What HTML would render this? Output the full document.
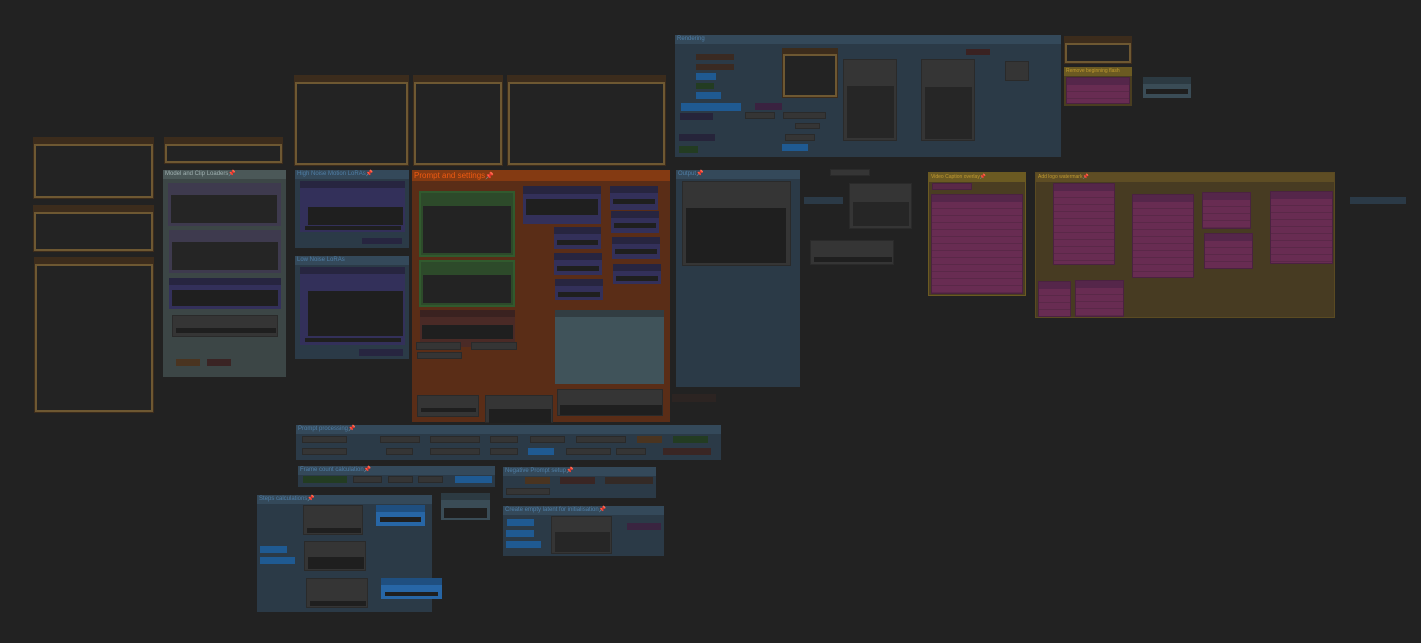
<!DOCTYPE html>
<html><head><meta charset="utf-8"><style>
body{margin:0;width:1421px;height:643px;background:#222222;overflow:hidden;font-family:"Liberation Sans",sans-serif;position:relative}
div{position:absolute;box-sizing:border-box}
.note{background:#3c2c1c}
.note i{position:absolute;left:1px;right:1px;top:7px;bottom:1px;border:2px solid #6e5832;background:#232323}
.bl{background:#2b3a47}.bl .t{background:#34495a;color:#4f7ea6}
.t{position:absolute;left:0;top:0;right:0;height:9px;padding-left:2px;font-size:6px;line-height:9px;white-space:nowrap}
.n{background:#353535;border:1px solid #2a2a2a}
.h{background:#2c2c2c}
.w{background:#1f1f1f}
.p{background:linear-gradient(#55264a 0 7px,transparent 7px),repeating-linear-gradient(#682c52 0 6px,#5a2848 6px 7px);border:1px solid #4a2240}
.pu{background:#33305a}
.ph{background:#272540}
.bb{background:#1f5a92}
</style></head><body>

<div class="note" style="left:33px;top:137px;width:121px;height:62px"><i></i></div>
<div class="note" style="left:33px;top:205px;width:121px;height:47px"><i></i></div>
<div class="note" style="left:34px;top:257px;width:120px;height:156px"><i></i></div>
<div class="note" style="left:164px;top:137px;width:119px;height:27px"><i></i></div>
<div class="note" style="left:294px;top:75px;width:115px;height:91px"><i></i></div>
<div class="note" style="left:413px;top:75px;width:90px;height:91px"><i></i></div>
<div class="note" style="left:507px;top:75px;width:159px;height:91px"><i></i></div>
<div class="note" style="left:1064px;top:36px;width:68px;height:28px"><i></i></div>

<div style="left:163px;top:170px;width:123px;height:207px;background:#3c4646">
<div class="t" style="background:#4b5858;color:#9fb0b0">Model and Clip Loaders<span style="color:#e0306a">📌</span></div>
<div style="left:5px;top:13px;width:113px;height:43px;background:#3e3a4e"><div class="w" style="left:3px;top:12px;width:106px;height:28px;background:#252525"></div></div>
<div style="left:6px;top:60px;width:112px;height:43px;background:#3e3a4e"><div class="w" style="left:3px;top:12px;width:106px;height:28px;background:#252525"></div></div>
<div class="pu" style="left:6px;top:108px;width:112px;height:31px"><div class="ph" style="left:0;top:0;right:0;height:7px"></div><div class="w" style="left:3px;top:12px;width:106px;height:16px"></div></div>
<div class="n" style="left:9px;top:145px;width:106px;height:22px"><div class="w" style="left:3px;top:12px;width:100px;height:5px"></div></div>
<div style="left:13px;top:189px;width:24px;height:7px;background:#4a3420"></div>
<div style="left:44px;top:189px;width:24px;height:7px;background:#3a2424"></div>
</div>

<div class="bl" style="left:295px;top:170px;width:114px;height:78px">
<div class="t">High Noise Motion LoRAs<span style="color:#e0306a">📌</span></div>
<div class="pu" style="left:5px;top:11px;width:105px;height:51px"><div class="ph" style="left:0;top:0;right:0;height:7px"></div><div class="w" style="left:8px;top:26px;width:95px;height:18px"></div><div class="w" style="left:5px;top:45px;width:96px;height:4px"></div></div>
<div class="ph" style="left:67px;top:68px;width:40px;height:6px"></div>
</div>

<div class="bl" style="left:295px;top:256px;width:114px;height:103px">
<div class="t">Low Noise LoRAs</div>
<div class="pu" style="left:5px;top:11px;width:105px;height:78px"><div class="ph" style="left:0;top:0;right:0;height:7px"></div><div class="w" style="left:8px;top:24px;width:95px;height:45px"></div><div class="w" style="left:5px;top:71px;width:96px;height:4px"></div></div>
<div class="ph" style="left:64px;top:93px;width:44px;height:7px"></div>
</div>

<div style="left:412px;top:170px;width:258px;height:252px;background:#5a2d17">
<div class="t" style="background:#843a12;color:#ee5a12;font-size:8px;height:11px;line-height:11px">Prompt and settings<span style="color:#e0306a;font-size:7px">📌</span></div>
<div style="left:7px;top:21px;width:96px;height:66px;background:#2d4a2a;border:2px solid #315a2e"><div class="w" style="left:2px;top:13px;width:88px;height:47px;background:#232323"></div></div>
<div style="left:7px;top:90px;width:96px;height:47px;background:#2d4a2a;border:2px solid #315a2e"><div class="w" style="left:2px;top:13px;width:88px;height:28px;background:#232323"></div></div>
<div style="left:8px;top:140px;width:95px;height:37px;background:#4a2a26"><div class="h" style="left:0;top:0;right:0;height:7px;background:#3a2220"></div><div class="w" style="left:2px;top:15px;width:91px;height:14px"></div></div>
<div class="n" style="left:4px;top:172px;width:45px;height:8px"></div>
<div class="n" style="left:59px;top:172px;width:46px;height:8px"></div>
<div class="n" style="left:5px;top:182px;width:45px;height:7px"></div>
<div class="pu" style="left:111px;top:16px;width:78px;height:38px"><div class="ph" style="left:0;top:0;right:0;height:8px"></div><div class="w" style="left:3px;top:13px;width:72px;height:16px"></div></div>
<div class="pu" style="left:198px;top:16px;width:48px;height:24px"><div class="ph" style="left:0;top:0;right:0;height:7px"></div><div class="w" style="left:3px;top:13px;width:42px;height:5px"></div></div>
<div class="pu" style="left:199px;top:41px;width:48px;height:22px"><div class="ph" style="left:0;top:0;right:0;height:7px"></div><div class="w" style="left:3px;top:12px;width:42px;height:5px"></div></div>
<div class="pu" style="left:200px;top:67px;width:48px;height:22px"><div class="ph" style="left:0;top:0;right:0;height:7px"></div><div class="w" style="left:3px;top:12px;width:42px;height:5px"></div></div>
<div class="pu" style="left:201px;top:94px;width:48px;height:20px"><div class="ph" style="left:0;top:0;right:0;height:7px"></div><div class="w" style="left:3px;top:12px;width:42px;height:5px"></div></div>
<div class="pu" style="left:142px;top:57px;width:47px;height:22px"><div class="ph" style="left:0;top:0;right:0;height:7px"></div><div class="w" style="left:3px;top:13px;width:41px;height:5px"></div></div>
<div class="pu" style="left:142px;top:83px;width:48px;height:22px"><div class="ph" style="left:0;top:0;right:0;height:7px"></div><div class="w" style="left:3px;top:13px;width:42px;height:5px"></div></div>
<div class="pu" style="left:143px;top:109px;width:48px;height:21px"><div class="ph" style="left:0;top:0;right:0;height:7px"></div><div class="w" style="left:3px;top:13px;width:42px;height:5px"></div></div>
<div style="left:143px;top:140px;width:109px;height:74px;background:#40535a"><div class="h" style="left:0;top:0;right:0;height:7px;background:#323d42"></div></div>
<div class="n" style="left:145px;top:219px;width:106px;height:27px"><div class="w" style="left:2px;top:15px;width:102px;height:10px"></div></div>
<div class="n" style="left:5px;top:225px;width:62px;height:22px"><div class="w" style="left:3px;top:12px;width:55px;height:4px"></div></div>
<div class="n" style="left:73px;top:225px;width:68px;height:28px"><div class="w" style="left:3px;top:13px;width:62px;height:14px"></div></div>
</div>

<div class="bl" style="left:676px;top:170px;width:124px;height:217px">
<div class="t">Output<span style="color:#e0306a">📌</span></div>
<div class="n" style="left:6px;top:11px;width:109px;height:85px"><div class="w" style="left:3px;top:26px;width:100px;height:55px"></div></div>
</div>

<div class="bl" style="left:675px;top:35px;width:386px;height:122px">
<div class="t">Rendering</div>
<div style="left:21px;top:19px;width:38px;height:6px;background:#3a2a22"></div>
<div style="left:21px;top:29px;width:38px;height:6px;background:#3a2a22"></div>
<div class="bb" style="left:21px;top:38px;width:20px;height:7px"></div>
<div style="left:21px;top:48px;width:18px;height:6px;background:#233c22"></div>
<div class="bb" style="left:21px;top:57px;width:25px;height:7px"></div>
<div class="bb" style="left:6px;top:68px;width:60px;height:8px"></div>
<div style="left:5px;top:78px;width:33px;height:7px;background:#26243a"></div>
<div style="left:4px;top:99px;width:36px;height:7px;background:#26243a"></div>
<div style="left:4px;top:111px;width:19px;height:7px;background:#233c22"></div>
<div style="left:80px;top:68px;width:27px;height:7px;background:#3a2240"></div>
<div class="n" style="left:70px;top:77px;width:30px;height:7px"></div>
<div class="n" style="left:108px;top:77px;width:43px;height:7px"></div>
<div class="n" style="left:120px;top:88px;width:25px;height:6px"></div>
<div class="n" style="left:110px;top:99px;width:30px;height:7px"></div>
<div class="bb" style="left:107px;top:109px;width:26px;height:7px"></div>
<div style="left:107px;top:13px;width:56px;height:50px;background:#3c2c1c"><div style="left:1px;top:6px;right:1px;bottom:1px;border:2px solid #6e5832;background:#232323"></div></div>
<div class="n" style="left:168px;top:24px;width:54px;height:82px"><div class="w" style="left:3px;top:26px;width:47px;height:52px;background:#262626"></div></div>
<div class="n" style="left:246px;top:24px;width:54px;height:82px"><div class="w" style="left:3px;top:27px;width:47px;height:52px;background:#262626"></div></div>
<div style="left:291px;top:14px;width:24px;height:6px;background:#3a2222"></div>
<div class="n" style="left:330px;top:26px;width:24px;height:20px"></div>
</div>

<div style="left:1064px;top:67px;width:68px;height:39px;background:#4a3e20">
<div class="t" style="background:#6b5a22;color:#c09a30;font-size:5px">Remove beginning flash</div>
<div class="p" style="left:2px;top:10px;width:64px;height:27px"></div>
</div>
<div style="left:1143px;top:77px;width:48px;height:21px;background:#3a4c56"><div class="h" style="left:0;top:0;right:0;height:7px;background:#2c3a42"></div><div class="w" style="left:3px;top:12px;width:42px;height:5px"></div></div>

<div class="n" style="left:830px;top:169px;width:40px;height:7px"></div>
<div style="left:804px;top:197px;width:39px;height:7px;background:#2b3a47"></div>
<div class="n" style="left:849px;top:183px;width:63px;height:46px"><div class="w" style="left:3px;top:18px;width:56px;height:24px;background:#262626"></div></div>
<div class="n" style="left:810px;top:240px;width:84px;height:25px"><div class="w" style="left:3px;top:16px;width:78px;height:5px"></div></div>

<div style="left:928px;top:172px;width:98px;height:124px;background:#4a3d22;border:1px solid #6b5a22">
<div class="t" style="background:#6b5a22;color:#c09a30;font-size:5px">Video Caption overlay<span style="color:#e0306a">📌</span></div>
<div class="p" style="left:3px;top:10px;width:40px;height:7px;background:#5a2848"></div>
<div class="p" style="left:2px;top:21px;width:92px;height:100px"></div>
</div>

<div style="left:1035px;top:172px;width:300px;height:146px;background:#473b22;border:1px solid #5a4a22">
<div class="t" style="background:#5e4d24;color:#c09a30;font-size:5px">Add logo watermark<span style="color:#e0306a">📌</span></div>
<div class="p" style="left:17px;top:10px;width:62px;height:82px"></div>
<div class="p" style="left:96px;top:21px;width:62px;height:84px"></div>
<div class="p" style="left:166px;top:19px;width:49px;height:37px"></div>
<div class="p" style="left:168px;top:60px;width:49px;height:36px"></div>
<div class="p" style="left:234px;top:18px;width:63px;height:73px"></div>
<div class="p" style="left:2px;top:108px;width:33px;height:36px"></div>
<div class="p" style="left:39px;top:107px;width:49px;height:37px"></div>
</div>
<div style="left:1350px;top:197px;width:56px;height:7px;background:#2b3a47"></div>
<div style="left:672px;top:394px;width:44px;height:8px;background:#2c2422"></div>

<div class="bl" style="left:296px;top:425px;width:425px;height:35px">
<div class="t">Prompt processing<span style="color:#e0306a">📌</span></div>
<div class="n" style="left:6px;top:11px;width:45px;height:7px"></div><div class="n" style="left:6px;top:23px;width:45px;height:7px"></div>
<div class="n" style="left:84px;top:11px;width:40px;height:7px"></div><div class="n" style="left:134px;top:11px;width:50px;height:7px"></div>
<div class="n" style="left:194px;top:11px;width:28px;height:7px"></div><div class="n" style="left:234px;top:11px;width:35px;height:7px"></div>
<div class="n" style="left:280px;top:11px;width:50px;height:7px"></div>
<div style="left:341px;top:11px;width:25px;height:7px;background:#4a3420"></div>
<div style="left:377px;top:11px;width:35px;height:7px;background:#233c22"></div>
<div class="n" style="left:90px;top:23px;width:27px;height:7px"></div><div class="n" style="left:134px;top:23px;width:50px;height:7px"></div>
<div class="n" style="left:194px;top:23px;width:28px;height:7px"></div>
<div class="bb" style="left:232px;top:23px;width:26px;height:7px"></div>
<div class="n" style="left:270px;top:23px;width:45px;height:7px"></div><div class="n" style="left:320px;top:23px;width:30px;height:7px"></div>
<div style="left:367px;top:23px;width:48px;height:7px;background:#3a2624"></div>
</div>

<div class="bl" style="left:298px;top:466px;width:197px;height:21px">
<div class="t">Frame count calculation<span style="color:#e0306a">📌</span></div>
<div style="left:5px;top:10px;width:44px;height:7px;background:#233c22"></div>
<div class="n" style="left:55px;top:10px;width:29px;height:7px"></div><div class="n" style="left:90px;top:10px;width:25px;height:7px"></div>
<div class="n" style="left:120px;top:10px;width:25px;height:7px"></div>
<div class="bb" style="left:157px;top:10px;width:37px;height:7px"></div>
</div>

<div class="bl" style="left:503px;top:467px;width:153px;height:31px">
<div class="t">Negative Prompt setup<span style="color:#e0306a">📌</span></div>
<div style="left:22px;top:10px;width:25px;height:7px;background:#4a3420"></div>
<div style="left:57px;top:10px;width:35px;height:7px;background:#3a2624"></div>
<div style="left:102px;top:10px;width:48px;height:7px;background:#342a26"></div>
<div class="n" style="left:3px;top:21px;width:44px;height:7px"></div>
</div>

<div class="bl" style="left:257px;top:495px;width:175px;height:117px">
<div class="t">Steps calculations<span style="color:#e0306a">📌</span></div>
<div class="n" style="left:46px;top:10px;width:60px;height:30px"><div class="w" style="left:3px;top:22px;width:54px;height:5px"></div></div>
<div class="n" style="left:47px;top:46px;width:62px;height:30px"><div class="w" style="left:3px;top:15px;width:56px;height:12px"></div></div>
<div class="n" style="left:49px;top:83px;width:62px;height:30px"><div class="w" style="left:3px;top:22px;width:56px;height:5px"></div></div>
<div class="bb" style="left:119px;top:10px;width:49px;height:21px;background:#2766a6"><div class="h" style="left:0;top:0;right:0;height:7px;background:#1f4f80"></div><div class="w" style="left:4px;top:12px;width:41px;height:5px"></div></div>
<div class="bb" style="left:124px;top:83px;width:61px;height:21px;background:#2766a6"><div class="h" style="left:0;top:0;right:0;height:7px;background:#1f4f80"></div><div class="w" style="left:4px;top:14px;width:53px;height:4px"></div></div>
<div class="bb" style="left:3px;top:51px;width:27px;height:7px"></div>
<div class="bb" style="left:3px;top:62px;width:35px;height:7px"></div>
</div>
<div style="left:441px;top:493px;width:49px;height:27px;background:#3a4c56"><div class="h" style="left:0;top:0;right:0;height:7px;background:#2c3a42"></div><div class="w" style="left:3px;top:15px;width:43px;height:10px"></div></div>

<div class="bl" style="left:503px;top:506px;width:161px;height:50px">
<div class="t">Create empty latent for initialisation<span style="color:#e0306a">📌</span></div>
<div class="bb" style="left:4px;top:13px;width:27px;height:7px"></div>
<div class="bb" style="left:3px;top:24px;width:28px;height:7px"></div>
<div class="bb" style="left:3px;top:35px;width:35px;height:7px"></div>
<div class="n" style="left:48px;top:10px;width:61px;height:38px"><div class="w" style="left:3px;top:15px;width:55px;height:20px;background:#262626"></div></div>
<div style="left:124px;top:17px;width:34px;height:7px;background:#3a2440"></div>
</div>

</body></html>
